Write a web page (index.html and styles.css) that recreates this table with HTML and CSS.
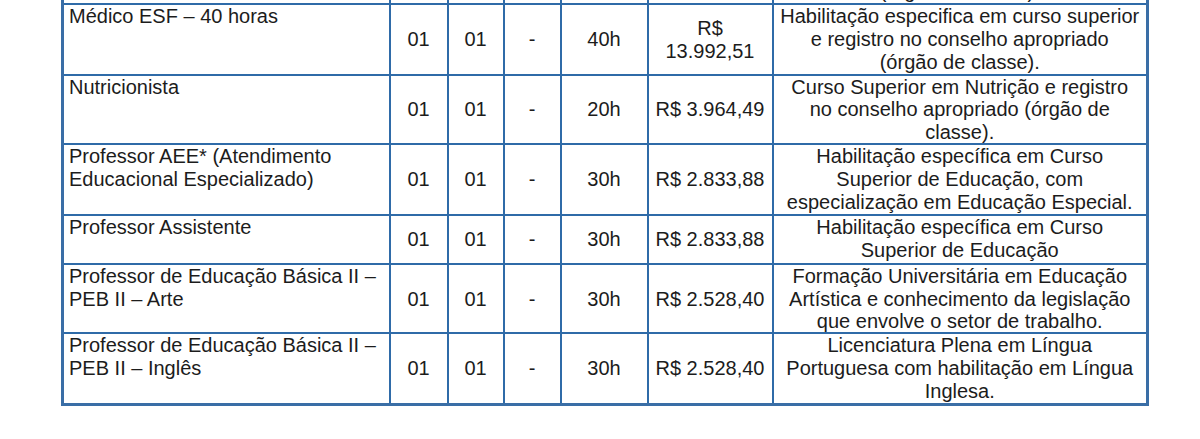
FILE: index.html
```html
<!DOCTYPE html>
<html lang="pt-BR">
<head>
<meta charset="utf-8">
<title>Tabela de cargos</title>
<link rel="stylesheet" href="styles.css">
</head>
<body>
<div class="page">
  <table class="cargos">
    <colgroup>
      <col class="c-cargo">
      <col class="c-n1">
      <col class="c-n2">
      <col class="c-n3">
      <col class="c-ch">
      <col class="c-sal">
      <col class="c-req">
    </colgroup>
    <tbody>
      <tr class="prev">
        <td class="cargo"></td>
        <td class="num"></td>
        <td class="num"></td>
        <td class="num"></td>
        <td class="num"></td>
        <td class="num"></td>
        <td class="req">Habilitação especifica em curso superior e registro no conselho apropriado (órgão de classe).</td>
      </tr>
      <tr>
        <td class="cargo">Médico ESF – 40 horas</td>
        <td class="num">01</td>
        <td class="num">01</td>
        <td class="num">-</td>
        <td class="num">40h</td>
        <td class="num">R$ 13.992,51</td>
        <td class="req">Habilitação especifica em curso superior e registro no conselho apropriado (órgão de classe).</td>
      </tr>
      <tr class="tight">
        <td class="cargo">Nutricionista</td>
        <td class="num">01</td>
        <td class="num">01</td>
        <td class="num">-</td>
        <td class="num">20h</td>
        <td class="num">R$ 3.964,49</td>
        <td class="req">Curso Superior em Nutrição e registro no conselho apropriado (órgão de classe).</td>
      </tr>
      <tr>
        <td class="cargo">Professor AEE* (Atendimento Educacional Especializado)</td>
        <td class="num">01</td>
        <td class="num">01</td>
        <td class="num">-</td>
        <td class="num">30h</td>
        <td class="num">R$ 2.833,88</td>
        <td class="req">Habilitação específica em Curso Superior de Educação, com especialização em Educação Especial.</td>
      </tr>
      <tr class="short">
        <td class="cargo">Professor Assistente</td>
        <td class="num">01</td>
        <td class="num">01</td>
        <td class="num">-</td>
        <td class="num">30h</td>
        <td class="num">R$ 2.833,88</td>
        <td class="req">Habilitação específica em Curso Superior de Educação</td>
      </tr>
      <tr class="snug">
        <td class="cargo">Professor de Educação Básica II – PEB II – Arte</td>
        <td class="num">01</td>
        <td class="num">01</td>
        <td class="num">-</td>
        <td class="num">30h</td>
        <td class="num">R$ 2.528,40</td>
        <td class="req">Formação Universitária em Educação Artística e conhecimento da legislação que envolve o setor de trabalho.</td>
      </tr>
      <tr>
        <td class="cargo">Professor de Educação Básica II – PEB II – Inglês</td>
        <td class="num">01</td>
        <td class="num">01</td>
        <td class="num">-</td>
        <td class="num">30h</td>
        <td class="num">R$ 2.528,40</td>
        <td class="req">Licenciatura Plena em Língua Portuguesa com habilitação em Língua Inglesa.</td>
      </tr>
    </tbody>
  </table>
</div>
</body>
</html>
```

FILE: styles.css
```css
html, body {
  margin: 0;
  padding: 0;
  background: #ffffff;
}

.page {
  width: 1200px;
  height: 439px;
  overflow: hidden;
  padding-left: 61px;
  box-sizing: border-box;
}

.cargos {
  margin-top: -69px;
  width: 1085px;
  table-layout: fixed;
  border-collapse: collapse;
  border: 3px solid #3a6ea6;
  font-family: "Liberation Sans", Arial, sans-serif;
  font-size: 20px;
  line-height: 23px;
  color: #1c1c1c;
}

.c-cargo { width: 327px; }
.c-n1 { width: 58px; }
.c-n2 { width: 56px; }
.c-n3 { width: 57px; }
.c-ch { width: 87px; }
.c-sal { width: 125px; }
.c-req { width: 375px; }

.cargos td {
  border: 2px solid #2f6ba8;
  padding: 0 4px;
}

.cargos td.cargo {
  vertical-align: top;
  text-align: left;
  padding: 0 2px 0 5px;
}

.cargos td.num {
  vertical-align: middle;
  text-align: center;
  padding: 0 3px;
}

.cargos td.req {
  vertical-align: middle;
  text-align: center;
  padding: 0 6px;
}

.cargos tr.tight td {
  line-height: 22.4px;
}

.cargos tr.short td.req {
  padding-bottom: 1px;
}

.cargos tr.snug td {
  line-height: 22.4px;
}

.cargos tr.prev td {
  border-top: 0;
}
```
